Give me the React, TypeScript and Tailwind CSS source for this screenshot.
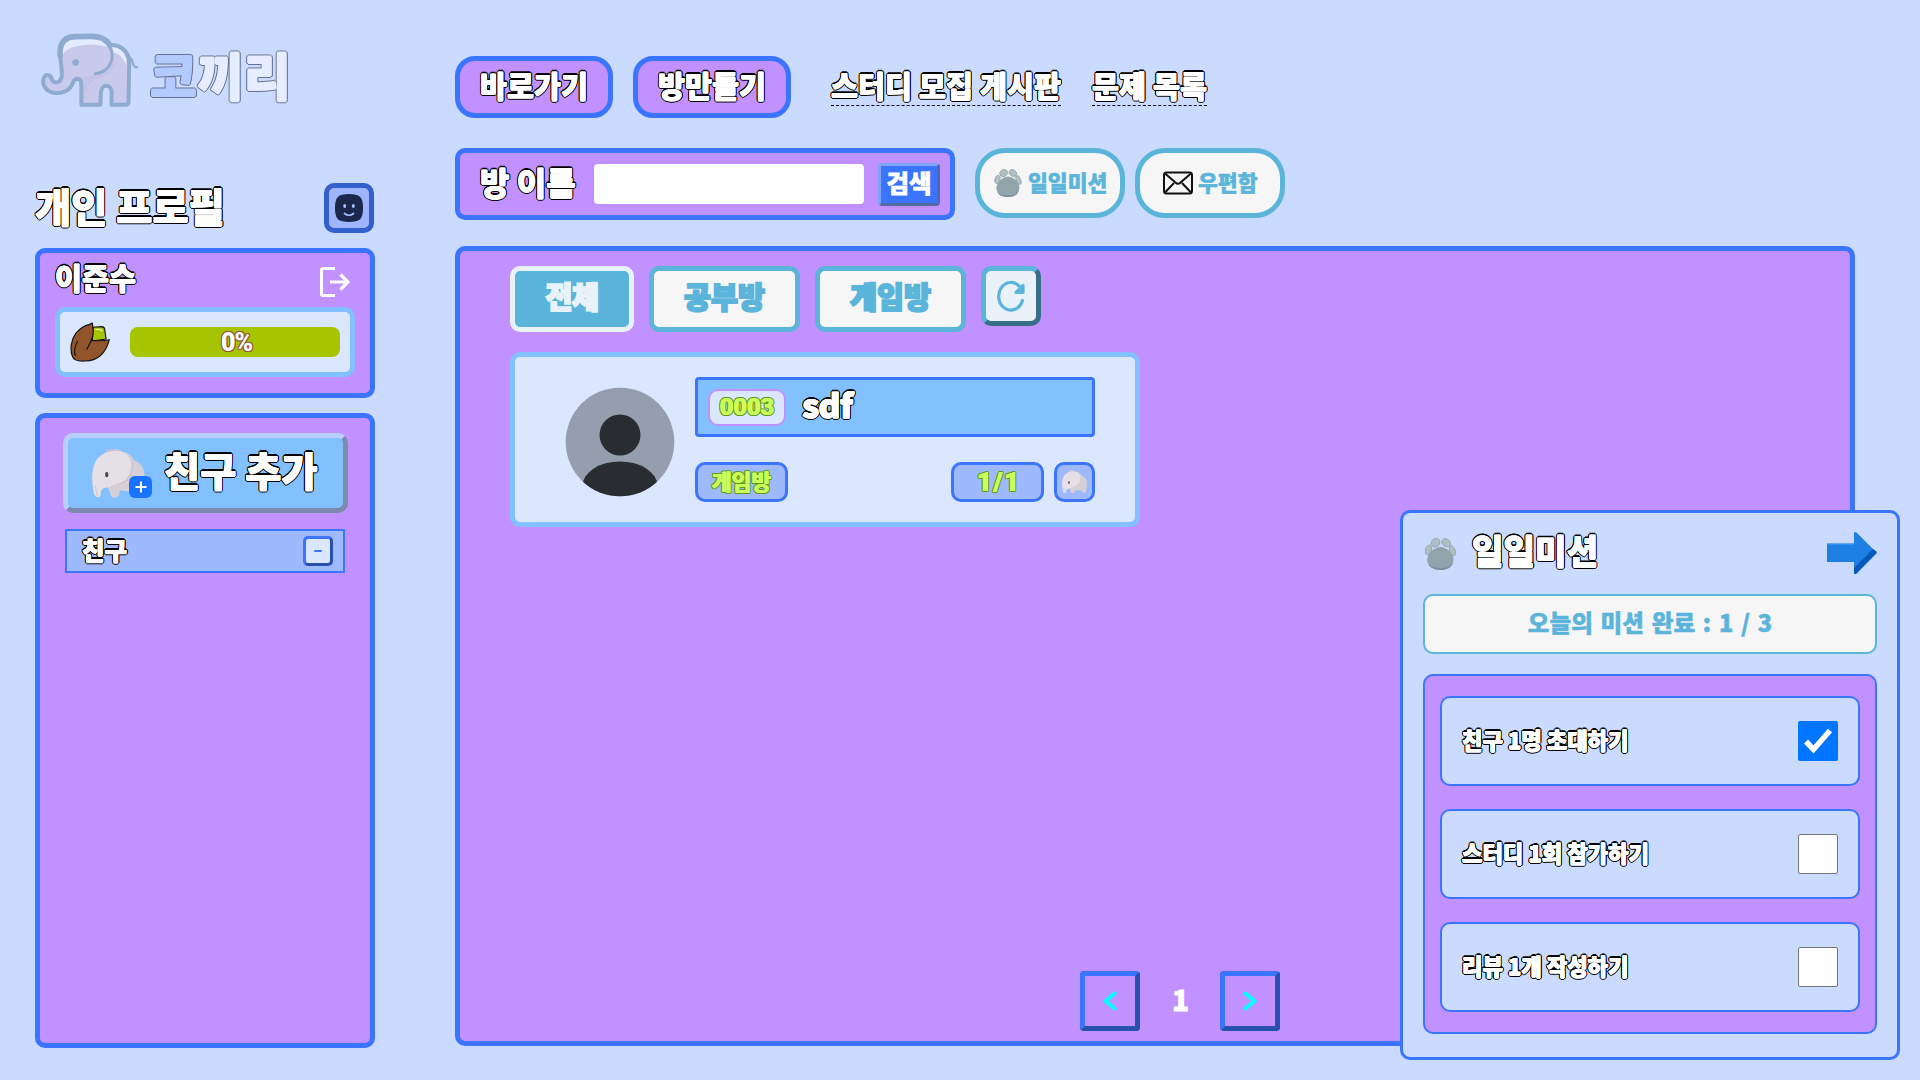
import React from "react";

const outline =
  "[text-shadow:0.5px_0_#fff,-0.5px_0_#fff,0_0.5px_#fff,0_-0.5px_#fff,1.6px_0_#000,-1.6px_0_#000,0_1.6px_#000,0_-1.6px_#000,1.2px_1.2px_#000,-1.2px_-1.2px_#000,1.2px_-1.2px_#000,-1.2px_1.2px_#000] text-white";
const limeOutline =
  "[text-shadow:0.4px_0_#ccff5c,-0.4px_0_#ccff5c,1.4px_0_#5b9a1c,-1.4px_0_#5b9a1c,0_1.4px_#5b9a1c,0_-1.4px_#5b9a1c,1px_1px_#5b9a1c,-1px_-1px_#5b9a1c,1px_-1px_#5b9a1c,-1px_1px_#5b9a1c] text-[#ccff5c]";

function LogoElephant() {
  return (
    <svg className="mt-8 ml-[5px] h-[77px] w-[100px] shrink-0" viewBox="60 36 300 232" fill="none" strokeLinecap="round" strokeLinejoin="round">
      <path
        d="M120 108C116 66 136 50 166 50L214 49C246 49 262 62 270 75C306 73 328 98 328 128L326 248Q325 255 317 255L275 255L275 216C273 192 245 192 243 218L241 255L184 255L184 196C184 172 165 172 159 188C150 212 128 222 104 220C76 216 64 194 71 174C76 162 92 164 94 176C99 193 118 191 124 174C128 158 122 130 120 108Z"
        fill="#c9caeb"
      />
      <path d="M128 106C126 66 150 58 172 57L216 57C240 58 256 66 264 82C236 72 204 74 174 78C146 82 132 94 128 106Z" fill="#e2ebff" />
      <path d="M276 82C302 80 322 104 320 136C308 112 296 100 282 98Z" fill="#e2ebff" />
      <path d="M282 104C292 144 262 174 226 180C200 190 196 220 192 250L192 200C192 182 186 176 178 172C212 172 220 166 226 162C262 158 282 138 282 104Z" fill="#c3c3e8" />
      <path
        d="M120 108C116 66 136 50 166 50L214 49C246 49 262 62 270 75C306 73 328 98 328 128L326 248Q325 255 317 255L275 255L275 216C273 192 245 192 243 218L241 255L184 255L184 196C184 172 165 172 159 188C150 212 128 222 104 220C76 216 64 194 71 174C76 162 92 164 94 176C99 193 118 191 124 174C128 158 122 130 120 108Z"
        stroke="#8fabd0"
        strokeWidth="12"
      />
      <path d="M120 108C116 66 136 50 166 50L214 49C246 49 262 62 270 75" stroke="#8fabd0" strokeWidth="17" />
      <path d="M268 78C288 112 272 156 226 162" stroke="#8fabd0" strokeWidth="9" />
      <path d="M328 112C342 116 336 146 351 142" stroke="#8fabd0" strokeWidth="7" />
      <circle cx="167" cy="128" r="10" fill="#8fabd0" />
    </svg>
  );
}

function Elephant({ className }: { className: string }) {
  return (
    <svg className={className} viewBox="212 114 164 152" fill="none">
      <path d="M300 150C350 140 374 166 372 204L370 244Q368 258 356 260Q344 260 342 246L298 240L296 254Q292 262 282 262Q272 262 270 252L262 228Z" fill="#d6d0d6" />
      <path d="M252 130C262 112 294 114 306 126C340 130 348 160 338 192C330 216 306 232 284 222L262 232C246 232 240 240 241 254Q240 261 232 261Q222 260 220 246C214 218 214 190 220 168C226 148 236 138 252 130Z" fill="#e4e0e6" />
      <path d="M252 130C262 112 294 114 306 126C290 120 270 122 252 130Z" fill="#c6c0c8" />
      <path d="M306 126C342 134 346 168 336 192C326 216 304 230 282 220C304 222 322 206 330 184C338 160 332 138 306 126Z" fill="#cdc7cf" />
      <ellipse cx="259" cy="193" rx="5" ry="8" fill="#4b4a4f" />
      <path d="M226 226C226 240 228 250 232 256" stroke="#cdc7cf" strokeWidth="3" />
    </svg>
  );
}

function Paw({ className }: { className: string }) {
  return (
    <svg className={className} viewBox="0 0 92 96">
      <path d="M46 26C66 28 86 46 85 66C82 88 64 96 46 96C28 96 8 88 6 66C7 46 26 28 46 26Z" fill="#92a4ab" />
      <path d="M8 76C16 88 30 90 46 90C62 90 76 88 84 72C80 90 64 96 46 96C28 96 14 90 8 76Z" fill="#77909c" />
      <g fill="#b0bfc4" stroke="#8799a1" strokeWidth="2">
        <ellipse cx="10" cy="36" rx="9" ry="15" transform="rotate(14 10 36)" />
        <ellipse cx="31" cy="14" rx="14" ry="12" transform="rotate(-35 31 14)" />
        <ellipse cx="63" cy="14" rx="14" ry="11" transform="rotate(35 63 14)" />
        <ellipse cx="82" cy="38" rx="8" ry="16" transform="rotate(-22 82 38)" />
      </g>
    </svg>
  );
}

function Nut() {
  return (
    <svg className="mr-5 h-10 w-10" viewBox="148 260 122 122" strokeLinejoin="round" strokeLinecap="round" stroke="#111" strokeWidth="3.5">
      <path d="M218 276L246 274Q254 276 254 284L258 312L216 318Z" fill="#a6c400" />
      <path d="M216 263C220 284 222 302 212 316C232 318 250 318 268 314C258 352 234 380 192 379C172 380 158 374 155 364C148 344 150 316 166 294C178 280 196 270 206 268Z" fill="#92552b" />
      <path d="M216 314C208 322 206 334 199 343M170 320C162 336 160 350 164 362" fill="none" />
      <path d="M227 283Q240 280 245 287" fill="none" stroke="#f7fff0" />
    </svg>
  );
}

function Profile() {
  return (
    <section className="h-[150px] rounded-[10px] border-5 border-[#3b74ff] bg-[#c191ff] px-[15px]">
      <div className="flex h-[54px] justify-between">
        <span className={`mt-[3px] text-[29.3px] leading-[40px] ${outline}`}>이준수</span>
        <svg className="mt-3.5 mr-[5px] h-[30px] w-[30px]" viewBox="0 0 30 30" fill="none" stroke="white">
          <path d="M15 1.5H3Q1.5 1.5 1.5 3V27Q1.5 28.5 3 28.5H15" strokeWidth="3" />
          <path d="M10 15H28M20.500 7.500L28 15L20.500 22.500" strokeWidth="3.2" />
        </svg>
      </div>
      <div className="flex h-[70px] w-[300px] items-center rounded-[10px] border-5 border-[#82c0ff] bg-[#dbe6ff] pl-2.5">
        <Nut />
        <div className="flex h-[30px] w-[210px] items-center justify-center rounded-lg bg-[#a6c400] font-['Roboto'] text-[25px] leading-[30px] tracking-[-1px] text-white [text-shadow:1px_0_#925a3b,-1px_0_#925a3b,0_1px_#925a3b,0_-1px_#925a3b,1px_1px_#925a3b,-1px_-1px_#925a3b,1px_-1px_#925a3b,-1px_1px_#925a3b]">
          <span className="mt-px ml-[3px]">0%</span>
        </div>
      </div>
    </section>
  );
}

function Sidebar() {
  return (
    <aside className="ml-[35px] flex w-[340px] shrink-0 flex-col">
      <div className="flex h-[183px]">
        <LogoElephant />
        <div className="mt-[38px] ml-[10px] text-[51px] leading-[72px]">
          <span className="text-[#b3caff] [text-shadow:0.8px_0_#b3caff,-0.8px_0_#b3caff,0_0.8px_#b3caff,0_-0.8px_#b3caff,1.8px_0_#66738f,-1.8px_0_#66738f,0_1.8px_#66738f,0_-1.8px_#66738f,1.3px_1.3px_#66738f,-1.3px_-1.3px_#66738f,1.3px_-1.3px_#66738f,-1.3px_1.3px_#66738f]">
            코
          </span>
          <span className="text-[#e5edff] [text-shadow:0.8px_0_#e5edff,-0.8px_0_#e5edff,0_0.8px_#e5edff,0_-0.8px_#e5edff,1.8px_0_#66738f,-1.8px_0_#66738f,0_1.8px_#66738f,0_-1.8px_#66738f,1.3px_1.3px_#66738f,-1.3px_-1.3px_#66738f,1.3px_-1.3px_#66738f,-1.3px_1.3px_#66738f]">
            끼리
          </span>
        </div>
      </div>
      <div className="flex h-[65px] justify-between">
        <h1 className={`-mt-[8px] text-[39.3px] leading-[60px] ${outline}`}>개인 프로필</h1>
        <button className="mr-px flex h-[50px] w-[50px] items-center justify-center rounded-[10px] border-5 border-[#355fce] bg-[#9fb6ff]">
          <svg className="h-7 w-7" viewBox="0 0 28 28" fill="none">
            <path d="M14 0C25 0 28 3 28 14C28 25 25 28 14 28C3 28 0 25 0 14C0 3 3 0 14 0Z" fill="#1c274c" />
            <ellipse cx="9.700" cy="12" rx="1.500" ry="2.100" fill="#a8c0ff" />
            <ellipse cx="18.300" cy="12" rx="1.500" ry="2.100" fill="#a8c0ff" />
            <path d="M9.500 19.500Q14 23 18.500 19.500" stroke="#a8c0ff" strokeWidth="1.700" strokeLinecap="round" />
          </svg>
        </button>
      </div>
      <Profile />
      <section className="mt-[15px] h-[635px] rounded-[10px] border-5 border-[#3b74ff] bg-[#c191ff] pt-[15px] pl-[23px]">
        <button className="flex h-20 w-[285px] rounded-[10px] border-5 border-t-[#b8ceff] border-r-[#7b8aad] border-b-[#7b8aad] border-l-[#b8ceff] bg-[#82c0ff]">
          <div className="relative mt-[10px] ml-[23px] h-[51px] w-[61px]">
            <Elephant className="h-[51px] w-[55px]" />
            <span className="absolute top-[28px] left-[38px] flex h-[22px] w-[23px] items-center justify-center rounded-md bg-[#1a73ff]">
              <svg className="h-3 w-3" viewBox="0 0 12 12" stroke="white" strokeWidth="2">
                <path d="M6 .5V11.500M.5 6H11.500" />
              </svg>
            </span>
          </div>
          <span className={`ml-3 mt-[3px] text-[39.3px] leading-[56px] ${outline}`}>친구 추가</span>
        </button>
        <div className="mt-4 ml-0.5 flex h-11 w-[280px] items-center justify-between rounded-[1px] border-2 border-[#3b74ff] bg-[#9fb9ff] pr-2.5 pl-[15px]">
          <span className={`mb-[2px] text-[24.5px] leading-9 ${outline}`}>친구</span>
          <button className="flex h-[30px] w-[30px] items-center justify-center rounded-[5px] border-3 border-t-[#3b74ff] border-r-[#2850ae] border-b-[#2850ae] border-l-[#3b74ff] bg-[#dbe6ff]">
            <span className="mb-px h-0.5 w-2 rounded-full bg-[#3b74ff]" />
          </button>
        </div>
      </section>
    </aside>
  );
}

function TopNav() {
  return (
    <nav className="flex h-[148px] pt-14">
      {["바로가기", "방만들기"].map((label) => (
        <button key={label} className="mr-5 flex h-[62px] w-[158px] justify-center rounded-[20px] border-5 border-[#3b74ff] bg-[#c191ff]">
          <span className={`text-[29.3px] leading-[46px] ${outline}`}>{label}</span>
        </button>
      ))}
      <a className={`ml-5 h-[50px] border-b border-dashed border-black text-[29.3px] leading-[56px] tracking-[0.1px] ${outline}`}>스터디 모집 게시판</a>
      <a className={`ml-[31px] h-[50px] border-b border-dashed border-black text-[29.3px] leading-[56px] tracking-[0.1px] ${outline}`}>문제 목록</a>
    </nav>
  );
}

function SearchRow() {
  return (
    <div className="flex h-[98px]">
      <div className="flex h-[72px] w-[500px] items-start rounded-[10px] border-5 border-[#3b74ff] bg-[#c191ff] pl-5">
        <span className={`mt-[3px] w-[114px] shrink-0 text-[32px] leading-[50px] ${outline}`}>방 이름</span>
        <input className="mt-[11px] h-10 w-[270px] rounded bg-white" />
        <button className="mt-[10px] ml-[14px] flex h-[43px] w-[62px] justify-center rounded-[4px] border-3 border-t-[#80a4f6] border-r-[#526ba8] border-b-[#526ba8] border-l-[#80a4f6] bg-[#3b74ff]">
          <span className="text-[24.5px] leading-[34px] text-white [-webkit-text-stroke:0.6px]">검색</span>
        </button>
      </div>
      <button className="ml-5 flex h-[70px] w-[150px] rounded-[30px] border-5 border-[#5bb4da] bg-[#f6f6f6] pl-[14px]">
        <Paw className="mt-4 h-7 w-7" />
        <span className="ml-1.5 text-[21.6px] leading-[58px] text-[#5bb4da] [-webkit-text-stroke:0.5px]">일일미션</span>
      </button>
      <button className="ml-2.5 flex h-[70px] w-[150px] rounded-[30px] border-5 border-[#5bb4da] bg-[#f6f6f6] pl-[23px]">
        <svg className="mt-[18px] h-6 w-[30px]" viewBox="0 0 30 24" fill="none" stroke="#111" strokeWidth="2">
          <rect x="1" y="1.500" width="28" height="21" rx="2.500" />
          <path d="M2 2.500L12.500 11.500Q15 14 17.500 11.500L28 2.500M2 21.500L11 12M28 21.500L19 12" />
        </svg>
        <span className="ml-[5px] text-[21.6px] leading-[58px] text-[#5bb4da] [-webkit-text-stroke:0.5px]">우편함</span>
      </button>
    </div>
  );
}

function RoomCard() {
  return (
    <article className="mt-5 flex h-[175px] w-[630px] rounded-[10px] border-5 border-[#82c0ff] bg-[#dbe6ff] pl-[50px]">
      <svg className="mt-[30px] h-[110px] w-[110px]" viewBox="0 0 110 110">
        <defs>
          <clipPath id="avatar">
            <circle cx="55" cy="55" r="54.300" />
          </clipPath>
        </defs>
        <g clipPath="url(#avatar)">
          <rect width="110" height="110" fill="#959eae" />
          <circle cx="55" cy="48" r="20.500" fill="#292d31" />
          <ellipse cx="55" cy="99" rx="37.500" ry="24.500" fill="#292d31" />
        </g>
      </svg>
      <div className="mt-5 ml-5 w-[400px]">
        <div className="flex h-[60px] rounded-[4px] border-3 border-[#3b74ff] bg-[#82c0ff] pl-2.5">
          <div className="mt-[9px] flex h-[37px] w-[78px] justify-center rounded-[10px] border-2 border-[#c191ff] bg-[#dbe6ff]">
            <span className={`font-['Roboto'] text-[23.5px] leading-[33px] ${limeOutline}`}>0003</span>
          </div>
          <span className={`ml-4 text-[34px] leading-[48px] tracking-[-1px] ${outline}`}>sdf</span>
        </div>
        <div className="mt-[25px] flex h-10">
          <div className="mr-auto flex w-[93px] justify-center rounded-[10px] border-3 border-[#3b74ff] bg-[#9fb9ff]">
            <span className={`text-[21.5px] leading-[32px] ${limeOutline}`}>게임방</span>
          </div>
          <div className="mr-2.5 flex w-[93px] justify-center rounded-[10px] border-3 border-[#3b74ff] bg-[#9fb9ff]">
            <span className={`font-['Roboto'] text-[26px] leading-[34px] tracking-[-1px] [word-spacing:-3px] ${limeOutline}`}>1 / 1</span>
          </div>
          <div className="flex w-[41px] items-center justify-center rounded-[10px] border-3 border-[#3b74ff] bg-[#9fb9ff]">
            <Elephant className="h-6 w-[27px]" />
          </div>
        </div>
      </div>
    </article>
  );
}

function Chevron({ flip = false }: { flip?: boolean }) {
  return (
    <button className="flex h-[60px] w-[60px] items-center justify-center rounded-[4px] border-5 border-t-[#3b74ff] border-r-[#2850ae] border-b-[#2850ae] border-l-[#3b74ff]">
      <svg className={flip ? "h-5 w-[14px] -scale-x-100" : "h-5 w-[14px]"} viewBox="0 0 14 20" fill="none" stroke="#00ffff" strokeWidth="4" strokeLinecap="round" strokeLinejoin="round">
        <path d="M11.500 2.500L2.500 10L11.500 17.500" />
      </svg>
    </button>
  );
}

function Rooms() {
  return (
    <section className="flex h-[800px] w-[1400px] flex-col rounded-[10px] border-5 border-[#3b74ff] bg-[#c191ff] pt-[15px] pb-2.5 pl-[50px]">
      <div className="flex h-[66px] gap-[15px]">
        <button className="flex w-[124px] justify-center rounded-[10px] border-5 border-[#e9f2f9] bg-[#5bb4da]">
          <span className="text-[29.3px] leading-[48px] tracking-[-0.5px] text-[#e9f2f9] [-webkit-text-stroke:2px]">전체</span>
        </button>
        {["공부방", "게임방"].map((label) => (
          <button key={label} className="flex w-[151px] justify-center rounded-[10px] border-5 border-[#5bb4da] bg-[#f6f6f6]">
            <span className="text-[29.3px] leading-[48px] text-[#5bb4da] [-webkit-text-stroke:2px]">{label}</span>
          </button>
        ))}
        <button className="flex h-[60px] w-[60px] items-center justify-center rounded-[10px] border-5 border-t-[#5bb4da] border-r-[#386f87] border-b-[#386f87] border-l-[#5bb4da] bg-[#e9f2f9]">
          <svg className="h-8 w-7" viewBox="0 0 28 32" fill="none" stroke="#5bb4da" strokeWidth="3.200" strokeLinecap="round" strokeLinejoin="round">
            <path d="M25.500 20.500A12.200 13.800 0 1 1 22.500 6.500L25.500 9.500" />
            <path d="M26 5.500V12.500H19Z" fill="#5bb4da" />
          </svg>
        </button>
      </div>
      <RoomCard />
      <div className="mt-auto ml-[570px] flex w-[200px] items-center justify-between">
        <Chevron />
        <span className="mt-[-4px] mr-[-1px] text-[28px] leading-10 text-white [-webkit-text-stroke:0.8px]">1</span>
        <Chevron flip />
      </div>
    </section>
  );
}

const missions = [
  { title: "친구 1명 초대하기", done: true },
  { title: "스터디 1회 참가하기", done: false },
  { title: "리뷰 1개 작성하기", done: false },
];

function MissionPanel() {
  return (
    <section className="absolute top-[510px] left-[1400px] h-[550px] w-[500px] rounded-[10px] border-3 border-[#3b74ff] bg-[#cadbff] px-5">
      <header className="flex h-[81px]">
        <Paw className="mt-[25px] ml-0.5 h-8 w-[31px]" />
        <h2 className={`mt-[8px] ml-4 text-[34.3px] leading-[56px] ${outline}`}>일일미션</h2>
        <svg className="mt-[19px] ml-auto h-[42px] w-[50px]" viewBox="0 0 50 42">
          <path d="M0 12H27V1Q28 -1 30 1L50 21L30 41Q28 43 27 41V30H0Z" fill="#1e80e2" />
          <path d="M50 20L30 41Q28 43 27 41V36L46 17Z" fill="#0658bd" />
          <path d="M0 12H27" stroke="#3a94ee" strokeWidth="1.500" />
        </svg>
      </header>
      <div className="flex h-[60px] justify-center rounded-[10px] border-2 border-[#5bb4da] bg-[#f6f6f6] text-[23.5px] leading-[52px] tracking-[0.1px] text-[#5bb4da] [-webkit-text-stroke:0.5px] [word-spacing:2.2px]">
        <span>오늘의 미션 완료 : 1 / 3</span>
      </div>
      <ul className="mt-5 flex h-[360px] flex-col gap-[23px] rounded-[10px] border-2 border-[#3b74ff] bg-[#c191ff] px-[15px] pt-5">
        {missions.map((m) => (
          <li key={m.title} className="flex h-[90px] items-center justify-between rounded-[10px] border-2 border-[#3b74ff] bg-[#cadbff] pr-5 pl-5">
            <span className={`mb-[4px] text-[22.3px] leading-8 tracking-[-0.1px] ${outline}`}>{m.title}</span>
            {m.done ? (
              <span className="flex h-10 w-10 items-center justify-center rounded-[2px] bg-[#0075ff]">
                <svg className="h-[26px] w-[30px]" viewBox="0 0 30 26" fill="none" stroke="white" strokeWidth="5.500">
                  <path d="M3 13.500L10.500 21.500L27 2.500" />
                </svg>
              </span>
            ) : (
              <span className="h-10 w-10 rounded-[2px] border border-[#767676] bg-white" />
            )}
          </li>
        ))}
      </ul>
    </section>
  );
}

export default function App() {
  return (
    <div className="relative flex h-[1080px] w-[1920px] overflow-hidden bg-[#cadbff] font-['Noto_Sans_CJK_KR',sans-serif] font-black whitespace-nowrap">
      <Sidebar />
      <main className="ml-20 w-[1400px]">
        <TopNav />
        <SearchRow />
        <Rooms />
      </main>
      <MissionPanel />
    </div>
  );
}
